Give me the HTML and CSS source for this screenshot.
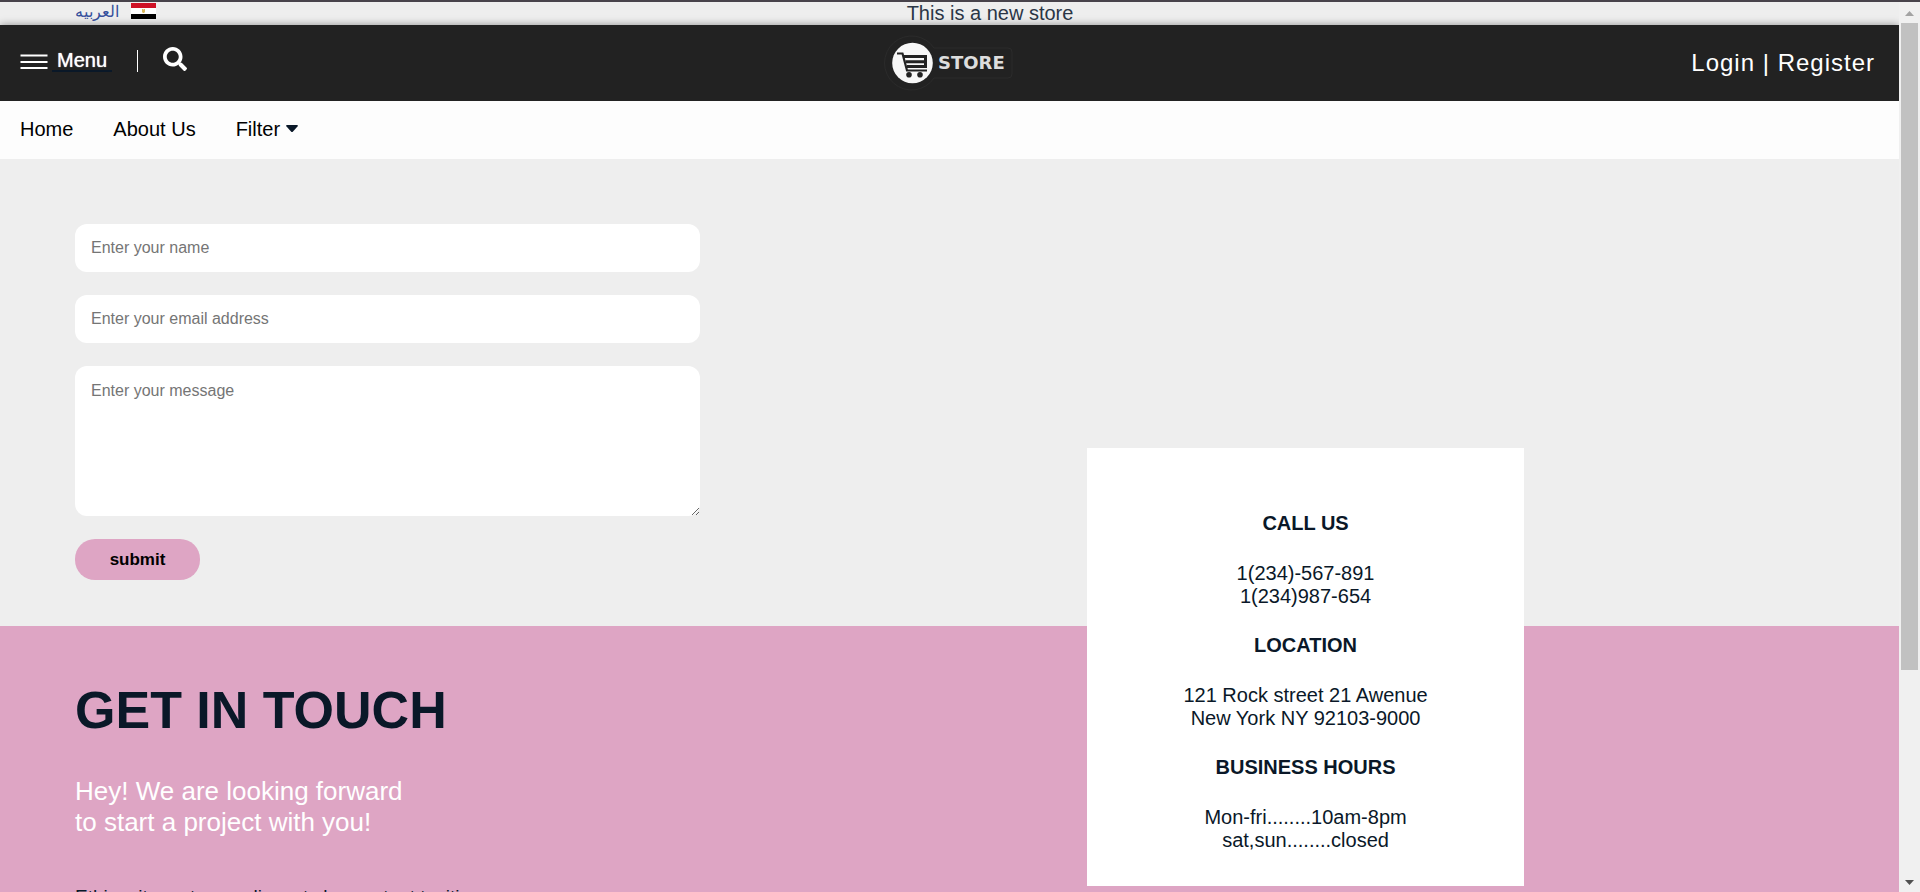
FILE: index.html
```html
<!DOCTYPE html>
<html lang="en">
<head>
<meta charset="utf-8">
<title>Store - Contact</title>
<link rel="stylesheet" href="styles.css">
</head>
<body>
<div class="page">
  <div class="topbar">
    <a class="lang" href="#" lang="ar">
      <span class="lang-name">العربيه</span>
      <svg class="flag" viewBox="0 0 25 16" aria-hidden="true">
        <rect width="25" height="16" fill="#fff"/>
        <rect width="25" height="5" fill="#ce1126"/>
        <rect y="11" width="25" height="5" fill="#000"/>
        <path d="M11 6h1l.5.8.5-.8h1v3l-1 1h-1l-1-1z" fill="#d9b75c"/>
      </svg>
    </a>
    <span class="notice">This is a new store</span>
    <span></span>
  </div>

  <header class="header">
    <div class="tools">
      <button class="menu" type="button">
        <svg class="bars" viewBox="0 0 27 16" aria-hidden="true"><path d="M0 2.500h27M0 9h27M0 15h27" stroke="#fff" stroke-width="2"/></svg>
        <span class="menu-label">Menu</span>
      </button>
      <span class="divider"></span>
      <button class="search" type="button" aria-label="Search">
        <svg viewBox="0 0 512 512" aria-hidden="true"><path fill="#fff" d="M505 442.700L405.300 343c-4.500-4.500-10.600-7-17-7H372c27.600-35.300 44-79.700 44-128C416 93.100 322.900 0 208 0S0 93.100 0 208s93.100 208 208 208c48.300 0 92.700-16.400 128-44v16.300c0 6.400 2.500 12.500 7 17l99.700 99.700c9.400 9.400 24.600 9.400 33.900 0l28.300-28.300c9.400-9.400 9.400-24.600.1-34zM208 336c-70.700 0-128-57.200-128-128 0-70.700 57.200-128 128-128 70.700 0 128 57.200 128 128 0 70.700-57.200 128-128 128z"/></svg>
      </button>
    </div>
    <a class="logo" href="#" aria-label="Store">
      <svg viewBox="-2 0 130 56" aria-hidden="true">
        <path d="M49 13h74a4 4 0 0 1 4 4v22a4 4 0 0 1-4 4H49A27 27 0 1 1 49 13z" fill="none" stroke="#2b2b2b"/>
        <circle cx="27.500" cy="28" r="20.300" fill="#f7f7f7"/>
        <path d="M12 18.500h5.500L22 35.500H42" fill="none" stroke="#222" stroke-width="2.200"/>
        <path d="M18.500 21.500H40.500V31.500H22M20.500 26.800H40" fill="none" stroke="#222" stroke-width="3"/>
        <circle cx="24" cy="39.800" r="2.800" fill="#222"/>
        <circle cx="35" cy="39.800" r="2.800" fill="#222"/>
        <text class="logo-text" x="53" y="34">STORE</text>
      </svg>
    </a>
    <div class="account"><a href="#">Login</a> | <a href="#">Register</a></div>
  </header>

  <nav class="nav">
    <a href="#">Home</a>
    <a href="#">About Us</a>
    <button class="filter" type="button">Filter
      <svg class="caret" viewBox="0 0 12 8" aria-hidden="true"><path d="M1 0h10q1.500.3.500 1.500L7 6.500q-1 1-2 0L.5 1.500Q-.5.300 1 0z" fill="#0a1828"/></svg>
    </button>
  </nav>

  <main>
    <form class="form">
      <input class="field" type="text" placeholder="Enter your name" aria-label="Name">
      <input class="field" type="email" placeholder="Enter your email address" aria-label="Email address">
      <textarea class="field message" placeholder="Enter your message" aria-label="Message"></textarea>
      <button class="submit" type="submit">submit</button>
    </form>

    <section class="touch">
      <h1>GET IN TOUCH</h1>
      <p class="lead">Hey! We are looking forward<br>to start a project with you!</p>
      <p class="text">Ethim sit amet eros aliquest class aptent taciti</p>
      <aside class="card">
        <h2>CALL US</h2>
        <p>1(234)-567-891<br>1(234)987-654</p>
        <h2>LOCATION</h2>
        <p>121 Rock street 21 Awenue<br>New York NY 92103-9000</p>
        <h2>BUSINESS HOURS</h2>
        <p>Mon-fri........10am-8pm<br>sat,sun........closed</p>
      </aside>
    </section>
  </main>
</div>
<div class="scrollbar" aria-hidden="true">
  <svg viewBox="0 0 17 17"><path d="M4 10h9L8.500 5z" fill="#a3a3a3"/></svg>
  <div class="track"><div class="thumb"></div></div>
  <svg viewBox="0 0 17 17"><path d="M4 6h9l-4.500 5z" fill="#505050"/></svg>
</div>
</body>
</html>
```
FILE: styles.css
```css
* {
  box-sizing: border-box;
}

body {
  margin: 0;
  height: 100vh;
  display: flex;
  overflow: hidden;
  border-top: 2px solid #48434b;
  background: #eee;
  color: #0a1828;
  font-family: "Liberation Sans", Arial, sans-serif;
  font-size: 20px;
  line-height: 23px;
}

a {
  color: inherit;
  text-decoration: none;
}

button {
  padding: 0;
  border: 0;
  background: none;
  color: inherit;
  font: inherit;
}

.page {
  flex: 1;
  min-width: 0;
  height: 100%;
  overflow: hidden;
}

.topbar {
  display: flex;
  justify-content: space-between;
  padding: 0 75px;
}

.lang {
  display: flex;
  gap: 12px;
  color: #344f9c;
  font-size: 16px;
}

.lang-name {
  line-height: 20px;
}

.flag {
  width: 25px;
  height: 16px;
  margin-top: 1px;
}

.notice {
  color: #2b3646;
}

.header {
  position: relative;
  display: grid;
  grid-template-columns: 1fr auto 1fr;
  align-items: center;
  height: 76px;
  padding: 0 24px 0 20px;
  background: #222;
  color: #fff;
  box-shadow: 0 0 8px rgba(0, 0, 0, 0.4);
}

.tools,
.menu {
  display: flex;
  align-items: center;
}

.tools {
  padding-bottom: 4px;
}

.menu {
  gap: 4px;
}

.bars {
  width: 28px;
  height: 16px;
}

.menu-label {
  padding: 0 5px;
  line-height: 20px;
  border-bottom: 2px solid #0a1828;
  text-shadow: 0 0 1px #fff;
}

.divider {
  width: 1px;
  height: 22px;
  margin: 0 25px;
  background: #fff;
}

.search {
  padding-bottom: 4px;
}

.search svg {
  display: block;
  width: 24px;
  height: 24px;
}

.logo svg {
  display: block;
  width: 130px;
  height: 56px;
}

.logo-text {
  fill: #ddd;
  font-family: "DejaVu Sans", sans-serif;
  font-size: 18px;
  font-weight: 700;
}

.account {
  justify-self: end;
  font-size: 24px;
  line-height: 28px;
  letter-spacing: 1px;
}

.nav {
  position: relative;
  display: flex;
  align-items: center;
  gap: 40px;
  height: 58px;
  padding: 0 20px 2px;
  background: #fdfdfd;
  color: #000;
}

.filter {
  display: flex;
  align-items: center;
  gap: 6px;
}

.caret {
  width: 12px;
  height: 8px;
}

.form {
  display: flex;
  flex-direction: column;
  align-items: flex-start;
  gap: 23px;
  padding: 65px 75px 46px;
}

.field {
  display: block;
  width: 625px;
  max-width: 100%;
  height: 48px;
  padding: 0 16px;
  border: 0;
  border-radius: 12px;
  background: #fff;
  font: 16px/18px "Liberation Sans", Arial, sans-serif;
}

.field::placeholder {
  color: #757575;
}

.message {
  height: 150px;
  padding: 16px;
}

.submit {
  width: 125px;
  height: 41px;
  border-radius: 20px;
  background: #dea5c4;
  color: #000;
  font-size: 17px;
  font-weight: 700;
}

.touch {
  position: relative;
  min-height: 600px;
  padding: 54px 75px;
  background: #dea5c4;
}

.touch h1 {
  margin: 0 0 36px;
  font-size: 52px;
  line-height: 60px;
}

.lead {
  margin: 0 0 48px;
  color: #fff;
  font-size: 26px;
  line-height: 31px;
}

.text {
  margin: 0;
  font-size: 19px;
  line-height: 22px;
}

.card {
  position: absolute;
  top: -178px;
  left: 57.25%;
  width: 23%;
  padding: 64px 16px 34px;
  background: #fff;
  text-align: center;
}

.card h2 {
  margin: 0 0 27px;
  font-size: 20px;
  line-height: 23px;
}

.card p {
  margin: 0 0 26px;
}

.card p:last-child {
  margin: 0;
}

.scrollbar {
  display: flex;
  flex-direction: column;
  align-items: center;
  width: 21px;
  padding: 4px 0 1px;
  background: #f0f0f0;
}

.scrollbar svg {
  width: 17px;
  height: 17px;
}

.track {
  flex: 1;
  width: 17px;
}

.thumb {
  height: 76%;
  background: #c1c1c1;
}
```
